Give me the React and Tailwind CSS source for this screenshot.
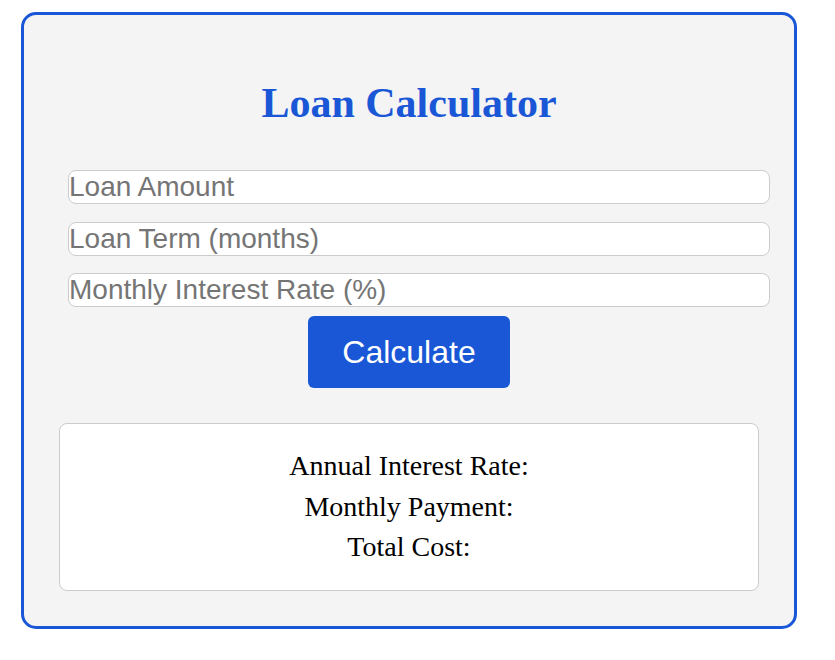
import React from "react";

export default function App() {
  return (
    <div className="min-h-screen bg-white pt-[12px] pl-[21px]">
      <div className="w-[776px] rounded-[15px] border-[3px] border-[#1a57d6] bg-[#f4f4f4] px-[35px] pb-[35px]">
        {/* Title */}
        <h1 className="mt-[64px] text-center text-[42px] leading-[48px] font-bold text-[#1a57d6] font-['Liberation_Serif',serif]">
          Loan Calculator
        </h1>

        {/* Inputs */}
        <div className="mt-[43px] flex flex-col">
          <input
            type="text"
            placeholder="Loan Amount"
            className="ml-[9px] h-[34px] w-[702px] rounded-[8px] border border-[#cccccc] bg-white p-0 text-[28px] leading-[32px] text-black placeholder:text-[#757575] font-['Liberation_Sans',Arial,sans-serif] outline-none"
          />
          <input
            type="text"
            placeholder="Loan Term (months)"
            className="mt-[17.5px] ml-[9px] h-[34px] w-[702px] rounded-[8px] border border-[#cccccc] bg-white p-0 text-[28px] leading-[32px] text-black placeholder:text-[#757575] font-['Liberation_Sans',Arial,sans-serif] outline-none"
          />
          <input
            type="text"
            placeholder="Monthly Interest Rate (%)"
            className="mt-[17.5px] ml-[9px] h-[34px] w-[702px] rounded-[8px] border border-[#cccccc] bg-white p-0 text-[28px] leading-[32px] text-black placeholder:text-[#757575] font-['Liberation_Sans',Arial,sans-serif] outline-none"
          />
        </div>

        {/* Button */}
        <div className="mt-[9px] flex justify-center">
          <button className="h-[72px] w-[202px] rounded-[6px] bg-[#1a57d6] text-[32px] text-white font-['Liberation_Sans',Arial,sans-serif]">
            Calculate
          </button>
        </div>

        {/* Results */}
        <div className="mt-[35px] flex flex-col items-center gap-[8.5px] rounded-[8px] border border-[#cccccc] bg-white pt-[26px] pb-[27px] text-[28px] leading-[32px] text-black font-['Liberation_Serif',serif]">
          <p>Annual Interest Rate:</p>
          <p>Monthly Payment:</p>
          <p>Total Cost:</p>
        </div>
      </div>
    </div>
  );
}
